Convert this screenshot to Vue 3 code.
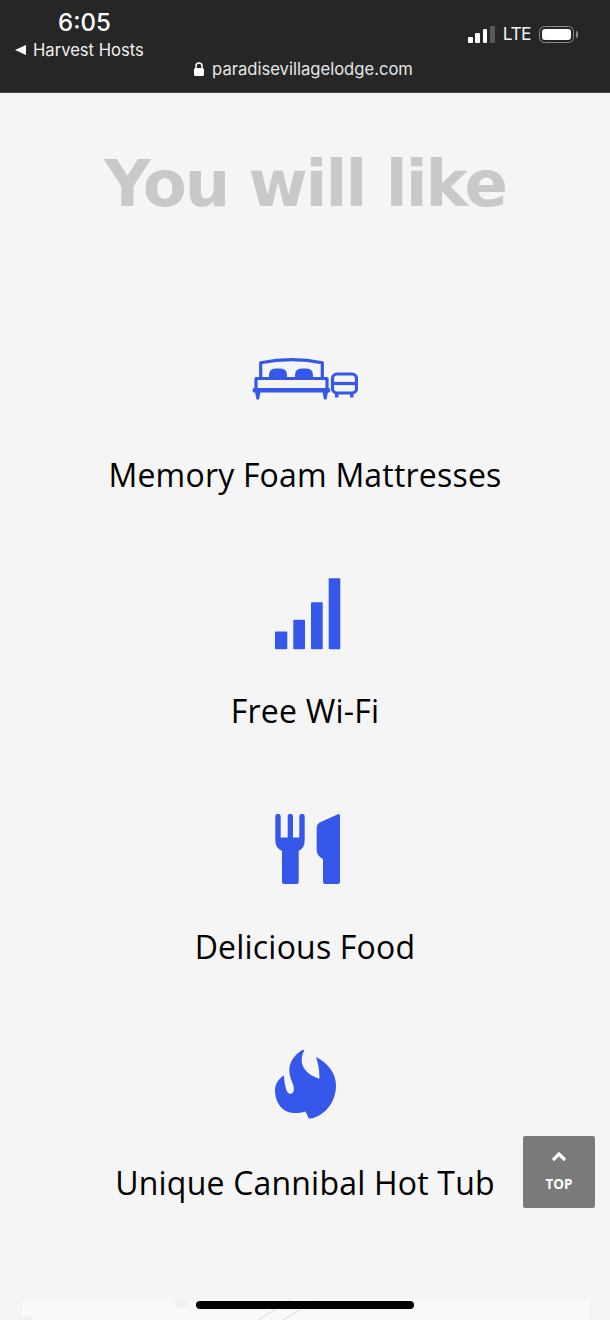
<template>
  <div class="page">
    <header class="topbar">
      <div class="topbar-row">
        <div class="left">
          <div class="time">6:05</div>
          <div class="back"><span class="back-arrow"></span>Harvest Hosts</div>
        </div>
        <div class="status">
          <div class="signal">
            <span v-for="(h, idx) in signalBars" :key="idx" class="signal-bar" :class="{ off: idx === 3 }" :style="{ height: h + 'px' }"></span>
          </div>
          <span class="lte">LTE</span>
          <div class="battery"><div class="battery-fill"></div></div>
          <div class="battery-cap"></div>
        </div>
      </div>
      <div class="url">
        <svg class="lock" width="10" height="14" viewBox="0 0 10 14">
          <path d="M2 6V4a3 3 0 0 1 6 0v2" fill="none" stroke="#fff" stroke-width="1.5" />
          <rect x="0" y="6" width="10" height="8" rx="1.5" fill="#fff" />
        </svg>
        <span>paradisevillagelodge.com</span>
      </div>
    </header>

    <main class="content">
      <h1 class="title">You will like</h1>
      <ul class="features">
        <li class="feature">
          <svg class="icon" width="106" height="72" viewBox="0 0 106 72">
            <g fill="none" stroke="#3558ea" stroke-width="3.200" stroke-linejoin="round">
              <path d="M8.700 36V20.800Q40 14.500 70.300 20.800V36" />
              <rect x="4" y="36.500" width="71" height="11" />
              <rect x="80.500" y="32" width="24" height="19" rx="4.500" />
              <path d="M80 41.500h24.500" />
            </g>
            <g fill="#3558ea">
              <path d="M17 36v-3q0-6.500 6.500-6.500h5q6.500 0 6.500 6.500v3z" />
              <path d="M43 36v-3q0-6.500 6.500-6.500h5q6.500 0 6.500 6.500v3z" />
              <rect x="0.700" y="46" width="77.500" height="4.500" rx="1.500" />
              <path d="M3 50h5.500l-1.500 7.500H4.500zM70.500 50H76l-1.500 7.500H72zM83 51h3.500v4.500H83zM98 51h3.500v4.500H98z" />
            </g>
          </svg>
          <span class="label">Memory Foam Mattresses</span>
        </li>
        <li class="feature">
          <svg class="icon" width="72" height="72" viewBox="0 0 72 72">
            <g fill="#3558ea">
              <rect x="6" y="53.500" width="12.300" height="17.700" rx="1" />
              <rect x="24.300" y="41.800" width="11.700" height="29.400" rx="1" />
              <rect x="42" y="24.200" width="11.700" height="47" rx="1" />
              <rect x="59.700" y="0.200" width="11.600" height="71" rx="1" />
            </g>
          </svg>
          <span class="label">Free Wi-Fi</span>
        </li>
        <li class="feature">
          <svg class="icon" width="72" height="72" viewBox="0 1 72 72">
            <g fill="#3558ea">
              <path d="M6.300 3.500a2.700 2.700 0 0 1 5.400 0V24.500H18.700V3.500a2.650 2.650 0 0 1 5.300 0V24.500H30.300V3.500a2.700 2.700 0 0 1 5.400 0V27Q35.700 35 29.700 38V69q0 2-2 2H15q-2 0-2-2V38Q6.300 35 6.300 27Z" />
              <path d="M69 1.300Q71 .5 71 3V69q0 2-2 2H56q-2 0-2-2V46q-6.300-3-6.300-9V15q0-4 3-5.500Z" />
            </g>
          </svg>
          <span class="label">Delicious Food</span>
        </li>
        <li class="feature">
          <svg class="icon" width="72" height="72" viewBox="0 2 72 72">
            <path fill="#3558ea" d="M37 0C27 4.500 20.300 13 20.300 22.300c0 5.500 2 10 4 15 1.200 3.500.5 7.400-2 8.400-2.500.8-4.300-1.500-5.300-5-1.200-4-2-8.500-2-13.400C9.500 31 6 36 6 42.300 6 54 13 65 25 65c4.500 0 8-.5 11-1.500 2 2 2.500 4 3.300 6.500 1.500.5 3.500.5 5 0C57.500 66 67 53 67 37.300 67 24.500 58 14.500 47 9c2.300 7 3.800 14 3.300 21.700C43 28.500 36 24 33.500 17 31.500 11 33.500 4 37 0Z" />
          </svg>
          <span class="label">Unique Cannibal Hot Tub</span>
        </li>
      </ul>
      <div class="map-strip">
        <span class="map-pin"></span>
        <span class="map-pin small"></span>
        <span class="map-road"></span>
        <span class="map-road second"></span>
      </div>
    </main>

    <button class="to-top">
      <svg width="16" height="11" viewBox="0 0 16 11">
        <path d="M2 9l6-6 6 6" fill="none" stroke="#fff" stroke-width="3.200" />
      </svg>
      <span>TOP</span>
    </button>
    <div class="home-bar"></div>
  </div>
</template>

<script setup>
const signalBars = [6, 10, 14, 17];
</script>

<style scoped>
.page {
  position: relative;
  height: 1320px;
  overflow: hidden;
  background: #f5f5f5;
  font-family: "Open Sans", sans-serif;
}

.topbar {
  height: 83px;
  padding: 9px 32px 0 15px;
  background: #262626;
  border-bottom: 1px solid #4a4a4a;
  color: #fff;
  font-family: Inter, sans-serif;
}

.topbar-row {
  display: flex;
  justify-content: space-between;
  align-items: flex-start;
}

.left {
  display: flex;
  flex-direction: column;
  align-items: center;
}

.time {
  font-size: 24px;
  font-weight: 500;
  line-height: 26px;
  margin: 1px 0 0 10px;
}

.back {
  display: flex;
  align-items: center;
  font-size: 16.600px;
  line-height: 20px;
  margin-top: 4px;
  color: #f2f2f2;
}

.back-arrow {
  width: 0;
  height: 0;
  margin-right: 7px;
  border-top: 5px solid transparent;
  border-bottom: 5px solid transparent;
  border-right: 11px solid #fff;
}

.status {
  display: flex;
  align-items: center;
  margin-top: 15px;
}

.signal {
  display: flex;
  align-items: flex-end;
  gap: 2.700px;
  height: 17px;
}

.signal-bar {
  width: 4.700px;
  border-radius: 1px;
  background: #fff;
}

.signal-bar.off {
  background: #5a5a5a;
}

.lte {
  margin-left: 8px;
  font-size: 17.500px;
  line-height: 20px;
  letter-spacing: -0.6px;
  color: #f2f2f2;
}

.battery {
  width: 35px;
  height: 17px;
  margin-left: 8px;
  padding: 2px;
  box-sizing: border-box;
  border: 1.500px solid #8a8a8a;
  border-radius: 5.500px;
}

.battery-fill {
  height: 100%;
  border-radius: 3px;
  background: #fff;
}

.battery-cap {
  width: 2.500px;
  height: 7px;
  margin-left: 1.500px;
  border-radius: 0 3px 3px 0;
  background: #8a8a8a;
}

.url {
  display: flex;
  justify-content: center;
  align-items: center;
  gap: 8px;
  margin: -2px 0 0 14px;
  font-size: 16.600px;
  line-height: 22px;
  color: #e6e6e6;
}

.content {
  display: flex;
  flex-direction: column;
  align-items: center;
}

.title {
  margin: 51px 0 0;
  font-family: "DejaVu Sans", sans-serif;
  font-size: 64px;
  font-weight: 700;
  line-height: 80px;
  letter-spacing: -2px;
  color: #c9c9c9;
}

.features {
  display: flex;
  flex-direction: column;
  gap: 86px;
  margin: 118px 0 0;
  padding: 0;
  list-style: none;
}

.feature {
  display: flex;
  flex-direction: column;
  align-items: center;
  gap: 44px;
}

.icon {
  display: block;
}

.label {
  font-size: 32px;
  line-height: 34px;
  letter-spacing: 0.2px;
  color: #000;
}

.map-strip {
  position: relative;
  align-self: center;
  width: 567px;
  height: 60px;
  margin-top: 100px;
  overflow: hidden;
  background: #f9f9f9;
}

.map-pin {
  position: absolute;
  left: 153px;
  top: -2px;
  width: 13px;
  height: 9px;
  background: #eef1f3;
  transform: rotate(-20deg);
}

.map-pin.small {
  left: -2px;
  top: 17px;
}

.map-road {
  position: absolute;
  left: 210px;
  top: 14px;
  width: 70px;
  height: 1px;
  background: #dcdcdc;
  transform: rotate(-32deg);
}

.map-road.second {
  left: 235px;
}

.to-top {
  position: absolute;
  left: 523px;
  top: 1136px;
  width: 72px;
  height: 72px;
  display: flex;
  flex-direction: column;
  align-items: center;
  padding: 15px 0 0;
  gap: 13px;
  border: 0;
  border-radius: 2px;
  background: #7a7a7a;
  color: #fff;
  font-family: "Open Sans", sans-serif;
  font-size: 13.500px;
  font-weight: 700;
  line-height: 18px;
}

.home-bar {
  position: absolute;
  left: 196px;
  top: 1301px;
  width: 218px;
  height: 8px;
  border-radius: 4px;
  background: #000;
}
</style>
